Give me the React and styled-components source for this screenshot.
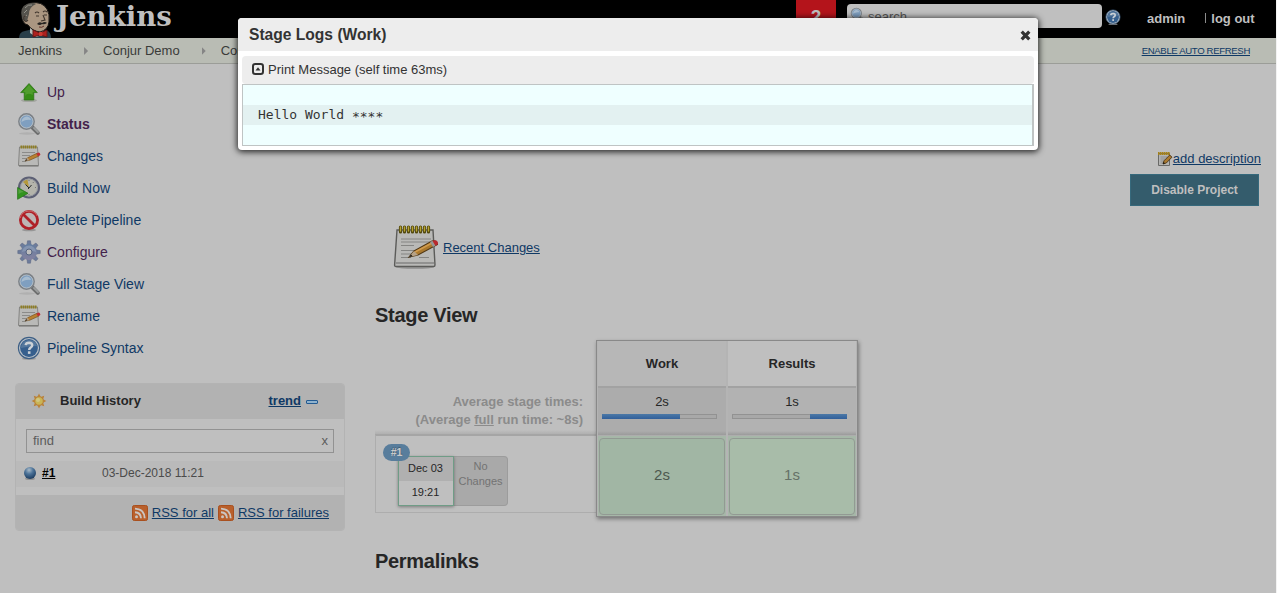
import React from "react";
import styled, { createGlobalStyle } from "styled-components";

const Global = createGlobalStyle`
  * { box-sizing: border-box; }
  body {
    margin: 0;
    overflow: hidden;
    background: #bfbfbf;
    color: #262626;
    font: 13px/18px "Liberation Sans", Helvetica, Arial, sans-serif;
  }
  svg { display: block; flex: none; }
  a { color: #0f3965; }
`;

const Page = styled.div`
  width: 1277px;
  height: 593px;
  overflow: hidden;
  border-right: 1px solid #f2f2f2;
`;

/* ---------- header ---------- */
const Header = styled.header`
  display: flex;
  height: 38px;
  padding-left: 19px;
  background: #000;
`;
const Brand = styled.div`
  display: flex;
  width: 777px;
  color: #bfbfbf;
  font: bold 27.6px/34px "DejaVu Serif", Georgia, serif;
`;
const BrandName = styled.span`
  margin-left: 4px;
`;
const Alert = styled.div`
  width: 40px;
  height: 38px;
  background: #b4141b;
  color: #bfbfbf;
  font-size: 19px;
  font-weight: bold;
  line-height: 33px;
  text-align: center;
`;
const Search = styled.div`
  display: flex;
  width: 255px;
  height: 24px;
  margin: 4px 0 0 11px;
  padding: 3px 0 0 3px;
  border-radius: 4px;
  background: #bfbfbf;
  color: #555;
  line-height: 19px;
`;
const SearchHint = styled.span`
  margin-left: 2px;
`;
const HeaderHelp = styled.div`
  margin: 9px 0 0 3px;
`;
const Login = styled.div`
  display: flex;
  margin-left: 26px;
  color: #bfbfbf;
  font-weight: bold;
  line-height: 38px;
`;
const Divider = styled.i`
  width: 1px;
  height: 10px;
  margin: 13px 5px 0 20px;
  background: #8c8c8c;
`;

/* ---------- breadcrumbs ---------- */
const Crumbs = styled.nav`
  display: flex;
  height: 26px;
  padding: 0 26px 0 18px;
  border-bottom: 1px solid #9b9d98;
  background: #b9bcb4;
  color: #3a3b39;
  line-height: 25px;
`;
const CrumbArrow = styled.i`
  width: 4px;
  height: 8px;
  margin: 9px 15px 0 22px;
  background: #858585;
  clip-path: polygon(0 0, 100% 50%, 0 100%);
`;
const Refresh = styled.a`
  margin-left: auto;
  font-size: 9.6px;
  letter-spacing: -0.35px;
  text-decoration: underline;
`;

/* ---------- side panel ---------- */
const Body = styled.div`
  display: flex;
`;
const Side = styled.aside`
  width: 330px;
  margin-left: 15px;
  padding-top: 12px;
`;
const Task = styled.div`
  display: flex;
  align-items: center;
  gap: 6px;
  height: 32px;
  padding-left: 2px;
  color: ${(p) => (p.$visited ? "#43224b" : "#0f3965")};
  font-size: 14px;
  font-weight: ${(p) => (p.$active ? "bold" : "normal")};
`;
const History = styled.section`
  height: 148px;
  margin-top: 19px;
  border: 1px solid #b3b3b3;
  border-radius: 4px;
  overflow: hidden;
`;
const HistoryHead = styled.div`
  display: flex;
  align-items: center;
  height: 35px;
  padding: 0 26px 2px 15px;
  background: #b2b2b2;
  font-weight: bold;
`;
const HistoryTitle = styled.span`
  flex: 1;
  margin-left: 13px;
`;
const Collapse = styled.i`
  width: 12px;
  height: 4px;
  margin: 3px 0 0 5px;
  border: 1px solid #235a91;
  border-radius: 1px;
  background: #8fb2cd;
`;
const Find = styled.div`
  display: flex;
  justify-content: space-between;
  height: 24px;
  margin: 10px 10px 8px;
  padding: 0 5px 0 6px;
  border: 1px solid #929292;
  color: #5c5c5c;
  line-height: 22px;
`;
const Build = styled.div`
  display: flex;
  align-items: center;
  height: 26px;
  padding: 0 0 2px 7px;
  background: #bababa;
  color: #4b4b4b;
  font-size: 12px;
`;
const BuildLink = styled.a`
  width: 60px;
  margin-left: 5px;
  color: #000;
  font-weight: bold;
  text-decoration: underline;
`;
const HistoryFoot = styled.div`
  display: flex;
  align-items: center;
  justify-content: flex-end;
  gap: 4px;
  height: 36px;
  margin-top: 8px;
  padding-right: 15px;
  background: #b2b2b2;
  a { text-decoration: underline; }
`;

/* ---------- main panel ---------- */
const Main = styled.main`
  flex: 1;
  padding: 86px 15px 0 30px;
`;
const Link = styled.a`
  text-decoration: underline;
`;
const Describe = styled.div`
  display: flex;
  justify-content: flex-end;
  height: 24px;
  svg { margin-top: 1px; }
`;
const Disable = styled.button`
  display: block;
  width: 129px;
  height: 32px;
  margin: 0 2px 0 auto;
  padding: 0;
  border: 1px solid #36697c;
  background: #345c6c;
  color: #bfbfbf;
  font: bold 12px "Liberation Sans", sans-serif;
`;
const Recent = styled.div`
  display: flex;
  align-items: center;
  height: 48px;
  margin: 17px 0 0 16px;
  gap: 4px;
  a { padding-top: 2px; }
`;
const Heading = styled.h2`
  margin: 0;
  padding-top: ${(p) => p.$top}px;
  font-size: 20px;
  letter-spacing: -0.3px;
  line-height: 24px;
`;
const StageView = styled.div`
  display: flex;
  margin-top: 13px;
`;
const Runs = styled.div`
  width: 221px;
`;
const Averages = styled.div`
  height: 94px;
  padding: 53px 13px 0 0;
  background: linear-gradient(transparent 90px, #b0b0b0);
  color: #8b8b8b;
  font-weight: bold;
  text-align: right;
`;
const Run = styled.div`
  display: flex;
  height: 79px;
  padding: 20px 0 0 22px;
  border: 1px solid #adadad;
  border-top: 2px solid #a5a5a5;
  border-right: 0;
`;
const RunDate = styled.div`
  position: relative;
  width: 56px;
  height: 50px;
  border: 1px solid #6f9c86;
  box-shadow: 0 1px 3px rgba(0, 0, 0, 0.35);
  font-size: 11px;
  line-height: 23px;
  text-align: center;
`;
const RunDay = styled.div`
  height: 24px;
  padding-right: 1px;
  background: #b0b0b0;
`;
const RunHour = styled.div`
  padding-right: 1px;
`;
const Badge = styled.span`
  position: absolute;
  top: -13px;
  left: -16px;
  width: 27px;
  height: 17px;
  border-radius: 9px;
  background: #587d9c;
  color: #c9c9c9;
  font-size: 10.5px;
  font-weight: bold;
  line-height: 17px;
  text-shadow: 0 -1px 1px rgba(0, 0, 0, 0.3);
`;
const NoChanges = styled.div`
  width: 54px;
  height: 50px;
  padding-top: 2px;
  border: 1px solid #9c9c9c;
  border-left: 0;
  border-radius: 0 4px 4px 0;
  background: #a9a9a9;
  color: #737373;
  font-size: 11px;
  line-height: 15px;
  text-align: center;
`;
const Stages = styled.div`
  display: grid;
  grid-template-columns: 128px 128px;
  gap: 2px;
  width: 262px;
  height: 177px;
  border: 1px solid #898989;
  padding-left: 1px;
  background: #b4b4b4;
  box-shadow: 1px 2px 4px rgba(0, 0, 0, 0.4);
`;
const StageName = styled.div`
  height: 45px;
  background: ${(p) => (p.$hover ? "#b7b7b7" : "#bfbfbf")};
  font-weight: bold;
  line-height: 45px;
  text-align: center;
`;
const StageAverage = styled.div`
  height: 49px;
  padding: 5px 9px 0 4px;
  border-top: 2px solid #a2a2a2;
  background: linear-gradient(transparent 43px, #9b9b9b),
    ${(p) => (p.$hover ? "#acacac" : "#b2b2b2")};
  text-align: center;
`;
const AverageTime = styled.div`
  padding-left: 5px;
`;
const Meter = styled.div`
  height: 5px;
  margin-top: 3px;
  padding-left: ${(p) => p.$start}px;
  border: 1px solid #929292;
  background: #a8a8a8;
`;
const MeterFill = styled.div`
  width: ${(p) => p.$width}px;
  height: 5px;
  margin: -1px;
  background: linear-gradient(#4c79a7, #315f9a);
`;
const StageCell = styled.div`
  height: 81px;
  padding: 2px 1px;
  background: #a6b7a8;
  border-top: 1px solid #adadad;
`;
const StageTime = styled.div`
  height: 77px;
  border: 1px solid #929a93;
  border-radius: 4px;
  background: ${(p) => (p.$hover ? "#a1b6a4" : "#a8bca9")};
  color: ${(p) => (p.$hover ? "#4d594f" : "#657167")};
  font-size: 15px;
  line-height: 71px;
  text-align: center;
`;

/* ---------- dialog ---------- */
const Dialog = styled.div`
  position: absolute;
  top: 18px;
  left: 238px;
  width: 800px;
  height: 132px;
  border-radius: 4px;
  overflow: hidden;
  background: #fff;
  color: #333;
  box-shadow: 0 1px 6px 1px rgba(0, 0, 0, 0.8);
`;
const DialogHead = styled.div`
  display: flex;
  justify-content: space-between;
  height: 33px;
  padding: 0 7px 0 11px;
  background: #ededed;
  font-size: 15.6px;
  font-weight: bold;
  line-height: 33px;
`;
const Close = styled.div`
  padding-top: 12px;
`;
const Step = styled.div`
  display: flex;
  align-items: center;
  gap: 4px;
  height: 28px;
  margin: 5px 4px 0;
  padding-left: 10px;
  border-radius: 4px;
  background: #ededed;
  svg { margin-bottom: 2px; }
`;
const Log = styled.div`
  height: 62px;
  margin: 0 4px;
  padding: 20px 0;
  border: 1px solid #bfc4c4;
  border-right-width: 2px;
  background: #efffff;
`;
const LogLine = styled.pre`
  height: 20px;
  margin: 0;
  padding-left: 15px;
  background: #e3f1f1;
  font: 13px/19px "DejaVu Sans Mono", monospace;
`;
const Masked = styled.span`
  position: relative;
  top: 2px;
`;

/* ---------- icons ---------- */
const Butler = () => (
  <svg width="33" height="38" viewBox="0 0 33 38">
    <path d="M0 38Q0 32 6 31L14 29L29 31Q32 33 32 38Z" fill="#283e49" />
    <path d="M11 27L18 35L24 28L26 34L17 37L11 33Z" fill="#b9bdba" />
    <path d="M4 13Q3 5 12 3Q23 1 28 9Q31 14 30 22Q29 30 21 32Q13 31 9 25Q4 24 3 18Z" fill="#aa9681" stroke="#171513" strokeWidth="1" />
    <path d="M3 18Q0 7 8 4Q13 2 17 4Q10 7 10 14L8 21Q4 22 3 18Z" fill="#55534d" />
    <path d="M6 8Q9 4 13 5M5 13L8 10M5 17L8 15" stroke="#94938b" fill="none" />
    <path d="M7 16Q4 16 5 20Q7 23 9 20M16 13Q18 11 20 13M24 12Q26 10 28 12M17 16H20M25 15H28M24 15L26 20L22 21" stroke="#41362e" fill="none" strokeWidth="1.1" />
    <path d="M18 24Q20 21 23 23Q26 21 28 23Q25 25 23 24Q21 26 18 24Z" fill="#282522" />
    <path d="M20 27Q23 28 25 26" stroke="#5f3027" fill="none" />
    <path d="M14 30L21 33L28 30V37L21 35L14 37Z" fill="#ad201e" stroke="#621817" />
    <rect x="20" y="32" width="3.5" height="4" rx="1" fill="#cc3a31" />
  </svg>
);

const UpIcon = () => (
  <svg width="24" height="24" viewBox="0 0 24 24">
    <ellipse cx="12" cy="20.5" rx="8" ry="1.6" fill="#8f938b" opacity=".6" />
    <path d="M12 3.5L20.3 12.6H16.8V20H7.2V12.6H3.7Z" fill="#368d16" stroke="#2a7112" strokeWidth=".7" />
    <path d="M12 5L18 12H15.7V15Q10 12 8.3 16V12H6Z" fill="#62a83e" opacity=".6" />
  </svg>
);

const LensIcon = ({ size = 24 }) => (
  <svg width={size} height={size} viewBox="0 0 24 24">
    <ellipse cx="10" cy="21.5" rx="8" ry="1.2" fill="#b0b0b0" />
    <path d="M15.5 15.5L20.8 20.8" stroke="#6d6e6e" strokeWidth="4" strokeLinecap="round" />
    <path d="M17 16L21 20" stroke="#9c9e9e" strokeWidth="1.8" strokeLinecap="round" />
    <circle cx="9.500" cy="9.500" r="7.600" fill="#7f9fc0" stroke="#7c8186" strokeWidth="1.600" />
    <circle cx="9.500" cy="9.500" r="6.500" fill="none" stroke="#b5bdc3" strokeWidth=".9" />
    <path d="M4.500 10Q5 5 10 4.500Q13.500 5 14 8Q9 7 4.500 10Z" fill="#b2c3d2" opacity=".8" />
  </svg>
);

const NotepadIcon = () => (
  <svg width="48" height="48" viewBox="0 0 48 48">
    <ellipse cx="24" cy="44" rx="19" ry="2" fill="#9a9a9a" />
    <path d="M6 7H42L44 42Q44 43.5 42.5 43.5H5Q3.5 43.5 3.6 42Z" fill="#b9b9b7" stroke="#5c5c5a" strokeWidth="1.4" />
    <path d="M5 40H43" stroke="#858583" strokeWidth="1.3" />
    <path d="M10 16H40M10 19H39M10 22.5H23M10 27.500H34M10 31H28M10 34.500H20M28 34.500H38" stroke="#858583" strokeWidth="1" />
    <path d="M9.500 4V9M13.500 4V9M17.500 4V9M21.500 4V9M25.500 4V9M29.500 4V9M33.500 4V9M37.500 4V9" stroke="#51480c" strokeWidth="3.2" strokeLinecap="round" />
    <path d="M9.500 4V8M13.500 4V8M17.500 4V8M21.500 4V8M25.500 4V8M29.500 4V8M33.500 4V8M37.500 4V8" stroke="#b8a332" strokeWidth="1.4" strokeLinecap="round" />
    <path d="M18 34L23 28L41 18Q46 17 46.500 21.500L27 32Z" fill="#aa792e" stroke="#523917" strokeWidth="1.1" />
    <path d="M24 29L41 20" stroke="#d19b4d" strokeWidth="1.6" />
    <path d="M18 34L23 28L27 32Z" fill="#b6a287" />
    <path d="M18 34L20 31.500L21.500 33.200Z" fill="#171513" />
    <path d="M39 19L42 24L44.500 22.700L41.500 17.800Z" fill="#969696" />
    <path d="M41.500 17.800Q46.500 16 47 20.500Q46.800 22 44.500 22.700Z" fill="#bb282e" />
  </svg>
);

const NotepadSmallIcon = () => (
  <svg width="24" height="24" viewBox="0 0 24 24">
    <path d="M2.500 3H20.500L21.500 21.500H1.500Z" fill="#b9b9b7" stroke="#858583" />
    <path d="M2 22H21.500" stroke="#6f6f6d" strokeWidth="1" />
    <path d="M5 8.500H18M5 11.500H13M5 14.500H10M5 17.500H9" stroke="#8b8b89" />
    <path d="M3.500 3H20" stroke="#8d7d25" strokeWidth="3" strokeDasharray="1.500 .5" />
    <path d="M8 17L10.500 13.800L20 9.300L22 12L12.500 16.300Z" fill="#b9812f" stroke="#775323" strokeWidth=".7" />
    <path d="M8 17L10.500 13.800L12.500 16.300Z" fill="#b09c82" />
    <path d="M8 17L9.500 15.200L10.400 16.200Z" fill="#171513" />
    <circle cx="21.500" cy="10.300" r="1.700" fill="#bf2e31" />
  </svg>
);

const ClockIcon = () => (
  <svg width="24" height="24" viewBox="0 0 24 24">
    <circle cx="12" cy="11.500" r="10" fill="#b4b4ab" stroke="#5d6075" strokeWidth="2.100" />
    <circle cx="12" cy="11.500" r="8.500" fill="none" stroke="#8d909e" strokeWidth=".7" />
    <path d="M12 11.500L6 6Q8.500 3.600 10.500 3.700Z" fill="#b5993b" />
    <path d="M12 12L8.500 8.500M12 12L14.500 9M12 12L11 13" stroke="#292b2d" strokeWidth="1" />
    <path d="M12 4V5M19 11.500H18M12 19V18M16.500 6L16 7" stroke="#777" />
    <path d="M.6 11.500L11 17.300L.6 23.300Z" fill="#32941f" stroke="#287519" strokeWidth=".8" />
    <path d="M1.500 13L7 16Q4 16 1.500 18Z" fill="#6aae56" opacity=".6" />
  </svg>
);

const ForbidIcon = () => (
  <svg width="24" height="24" viewBox="0 0 24 24">
    <ellipse cx="12" cy="22" rx="7" ry="1.300" fill="#969696" />
    <circle cx="12" cy="12" r="8.600" fill="#bdb5b5" stroke="#af2028" strokeWidth="2.800" />
    <path d="M6.200 6.200L17.800 17.800" stroke="#af2028" strokeWidth="2.800" />
    <path d="M3.200 10Q4.500 3.300 12 3Q18 3 20.200 8" fill="none" stroke="#c9686a" strokeWidth="1" />
  </svg>
);

const teeth = [0, 45, 90, 135, 180, 225, 270, 315];

const GearIcon = () => (
  <svg width="24" height="24" viewBox="0 0 24 24">
    <defs>
      <linearGradient id="gear" x2="0" y2="1">
        <stop offset="0" stopColor="#627da0" />
        <stop offset="1" stopColor="#85829f" />
      </linearGradient>
    </defs>
    {teeth.map((a) => (
      <path key={a} transform={`rotate(${a} 12 12)`} d="M9.800 6L10.500 .8H13.500L14.200 6Z" fill="#6c7b9b" stroke="#596580" strokeWidth=".5" />
    ))}
    <circle cx="12" cy="12" r="8" fill="url(#gear)" />
    <path d="M5 12Q6 6 12 5.500Q18 6 19 12Q12 9 5 12Z" fill="#929fb9" opacity=".65" />
    <circle cx="12" cy="12" r="3" fill="#bfbfbf" stroke="#566481" />
  </svg>
);

const HelpIcon = ({ size = 24 }) => (
  <svg width={size} height={size} viewBox="0 0 24 24">
    <ellipse cx="12" cy="22.800" rx="7" ry="1" fill="#989898" />
    <circle cx="12" cy="12" r="10.600" fill="#b9c0c7" stroke="#3d5f85" strokeWidth="1.100" />
    <circle cx="12" cy="12" r="8.900" fill="#365f8d" />
    <path d="M4 12Q4.500 4.500 12 4Q19 4.500 20 10Q13 10 4 12Z" fill="#6684a4" opacity=".65" />
    <path d="M8.700 9.200Q9 6.800 12.200 6.800Q15.300 6.900 15.200 9.300Q15.100 11 13.600 11.700Q12.200 12.500 12.200 14" fill="none" stroke="#cbd1d6" strokeWidth="2.500" />
    <rect x="10.900" y="15.300" width="2.600" height="2.600" fill="#cbd1d6" />
  </svg>
);

const SunIcon = () => (
  <svg width="16" height="16" viewBox="0 0 16 16">
    <g fill="#ba8238">
      {teeth.map((a) => (
        <path key={a} transform={`rotate(${a} 8 8)`} d="M6.200 4L8 .6L9.800 4Z" />
      ))}
    </g>
    <circle cx="8" cy="8" r="4.300" fill="#c9b556" stroke="#ba8238" />
    <circle cx="7" cy="7" r="2" fill="#d0c681" />
  </svg>
);

const BallIcon = () => (
  <svg width="14" height="14" viewBox="0 0 14 14">
    <defs>
      <radialGradient id="ball" cx=".42" cy=".25" r=".75">
        <stop offset="0" stopColor="#a9bac7" />
        <stop offset=".45" stopColor="#4c7399" />
        <stop offset="1" stopColor="#1c3c60" />
      </radialGradient>
    </defs>
    <ellipse cx="7" cy="12.800" rx="5" ry="1.200" fill="#929292" />
    <circle cx="7" cy="7" r="6" fill="url(#ball)" />
  </svg>
);

const RssIcon = () => (
  <svg width="16" height="16" viewBox="0 0 16 16">
    <rect x=".5" y=".5" width="15" height="15" rx="1.800" fill="#b9602c" stroke="#a9501f" />
    <circle cx="4.500" cy="11.700" r="1.500" fill="#cbc5c1" />
    <path d="M3 7.300Q8.700 7.600 9 13.200M3 3.600Q12.300 4 12.700 13.200" fill="none" stroke="#cbc5c1" strokeWidth="1.900" />
  </svg>
);

const EditIcon = () => (
  <svg width="16" height="16" viewBox="0 0 16 16">
    <path d="M1.500 2.500H12.500V14.500H1.500Z" fill="#b4b4b2" stroke="#696967" />
    <path d="M3.500 6H10M3.500 8H8M3.500 10H7M3.500 12H6" stroke="#858583" strokeWidth=".8" />
    <path d="M1 2.500H13" stroke="#a5821a" strokeWidth="3.200" strokeDasharray="1.600 .4" />
    <path d="M6 13L7 9.800L12.700 4L15 6.200L9.300 12Z" fill="#aa792e" stroke="#4a3315" strokeWidth=".9" />
    <path d="M6 13L6.600 11L8 12.300Z" fill="#111" />
  </svg>
);

const CloseIcon = () => (
  <svg width="11" height="11" viewBox="0 0 11 11">
    <path d="M1.700 1.700L9.300 9.300M9.300 1.700L1.700 9.300" stroke="#333" strokeWidth="3.300" />
  </svg>
);

const ToggleIcon = () => (
  <svg width="12" height="12" viewBox="0 0 12 12">
    <rect x="1" y="1" width="10" height="10" rx="2.300" fill="none" stroke="#333" strokeWidth="2" />
    <path d="M3.500 7.600L6 4.300L8.500 7.600Z" fill="#333" />
  </svg>
);

const tasks = [
  { label: "Up", icon: <UpIcon />, visited: true },
  { label: "Status", icon: <LensIcon />, visited: true, active: true },
  { label: "Changes", icon: <NotepadSmallIcon /> },
  { label: "Build Now", icon: <ClockIcon /> },
  { label: "Delete Pipeline", icon: <ForbidIcon /> },
  { label: "Configure", icon: <GearIcon />, visited: true },
  { label: "Full Stage View", icon: <LensIcon /> },
  { label: "Rename", icon: <NotepadSmallIcon /> },
  { label: "Pipeline Syntax", icon: <HelpIcon /> },
];

const stages = [
  { name: "Work", time: "2s", start: 0, width: 78, hover: true },
  { name: "Results", time: "1s", start: 78, width: 37 },
];

const Stage = ({ name, time, start, width, hover }) => (
  <div>
    <StageName $hover={hover}>{name}</StageName>
    <StageAverage $hover={hover}>
      <AverageTime>{time}</AverageTime>
      <Meter $start={start}>
        <MeterFill $width={width} />
      </Meter>
    </StageAverage>
    <StageCell>
      <StageTime $hover={hover}>{time}</StageTime>
    </StageCell>
  </div>
);

export default function App() {
  return (
    <>
      <Global />
      <Page>
        <Header>
          <Brand>
            <Butler />
            <BrandName>Jenkins</BrandName>
          </Brand>
          <Alert>2</Alert>
          <Search>
            <LensIcon size={16} />
            <SearchHint>search</SearchHint>
          </Search>
          <HeaderHelp>
            <HelpIcon size={16} />
          </HeaderHelp>
          <Login>
            <span>admin</span>
            <Divider />
            <span>log out</span>
          </Login>
        </Header>
        <Crumbs>
          <span>Jenkins</span>
          <CrumbArrow />
          <span>Conjur Demo</span>
          <CrumbArrow />
          <span>Conjur</span>
          <Refresh>ENABLE AUTO REFRESH</Refresh>
        </Crumbs>
        <Body>
          <Side>
            {tasks.map((t) => (
              <Task key={t.label} $visited={t.visited} $active={t.active}>
                {t.icon}
                <span>{t.label}</span>
              </Task>
            ))}
            <History>
              <HistoryHead>
                <SunIcon />
                <HistoryTitle>Build History</HistoryTitle>
                <Link>trend</Link>
                <Collapse />
              </HistoryHead>
              <Find>
                <span>find</span>
                <span>x</span>
              </Find>
              <Build>
                <BallIcon />
                <BuildLink>#1</BuildLink>
                <span>03-Dec-2018 11:21</span>
              </Build>
              <HistoryFoot>
                <RssIcon />
                <a>RSS for all</a>
                <RssIcon />
                <a>RSS for failures</a>
              </HistoryFoot>
            </History>
          </Side>
          <Main>
            <Describe>
              <EditIcon />
              <Link>add description</Link>
            </Describe>
            <Disable>Disable Project</Disable>
            <Recent>
              <NotepadIcon />
              <Link>Recent Changes</Link>
            </Recent>
            <Heading $top={32}>Stage View</Heading>
            <StageView>
              <Runs>
                <Averages>
                  Average stage times:
                  <br />
                  (Average <u>full</u> run time: ~8s)
                </Averages>
                <Run>
                  <RunDate>
                    <RunDay>Dec 03</RunDay>
                    <RunHour>19:21</RunHour>
                    <Badge>#1</Badge>
                  </RunDate>
                  <NoChanges>
                    No
                    <br />
                    Changes
                  </NoChanges>
                </Run>
              </Runs>
              <Stages>
                {stages.map((s) => (
                  <Stage key={s.name} {...s} />
                ))}
              </Stages>
            </StageView>
            <Heading $top={32}>Permalinks</Heading>
          </Main>
        </Body>
      </Page>
      <Dialog>
        <DialogHead>
          <span>Stage Logs (Work)</span>
          <Close>
            <CloseIcon />
          </Close>
        </DialogHead>
        <Step>
          <ToggleIcon />
          <span>Print Message (self time 63ms)</span>
        </Step>
        <Log>
          <LogLine>
            Hello World <Masked>****</Masked>
          </LogLine>
        </Log>
      </Dialog>
    </>
  );
}
